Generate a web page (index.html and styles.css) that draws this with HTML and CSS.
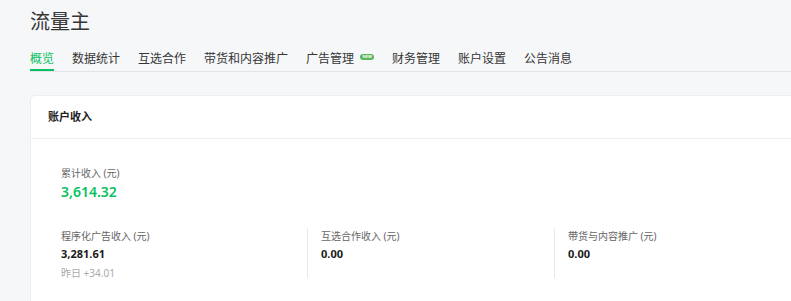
FILE: index.html
```html
<!DOCTYPE html>
<html lang="zh-CN">
<head>
<meta charset="utf-8">
<title>流量主</title>
<link rel="stylesheet" href="styles.css">
</head>
<body>
<div class="page">
  <h1 class="title">流量主</h1>
  <nav class="tabs">
    <a class="tab active">概览</a>
    <a class="tab">数据统计</a>
    <a class="tab">互选合作</a>
    <a class="tab">带货和内容推广</a>
    <a class="tab">广告管理<span class="badge">NEW</span></a>
    <a class="tab">财务管理</a>
    <a class="tab">账户设置</a>
    <a class="tab">公告消息</a>
  </nav>
  <section class="card">
    <div class="card-head">账户收入</div>
    <div class="card-body">
      <div class="total">
        <div class="label">累计收入 (元)</div>
        <div class="total-num">3,614.32</div>
      </div>
      <div class="cols">
        <div class="col">
          <div class="label">程序化广告收入 (元)</div>
          <div class="num">3,281.61</div>
          <div class="sub">昨日 +34.01</div>
        </div>
        <div class="col">
          <div class="label">互选合作收入 (元)</div>
          <div class="num">0.00</div>
        </div>
        <div class="col">
          <div class="label">带货与内容推广 (元)</div>
          <div class="num">0.00</div>
        </div>
      </div>
    </div>
  </section>
</div>
</body>
</html>
```
FILE: styles.css
```css
html, body {
  margin: 0;
  padding: 0;
  background: #f6f7f9;
  overflow: hidden;
}
body {
  font-family: "Noto Sans", "Noto Sans CJK SC", sans-serif;
  color: #333;
}
.page {
  width: 1100px;
  padding: 10px 0 0 30px;
}
.title {
  margin: 0;
  font-size: 20px;
  line-height: 24px;
  font-weight: 400;
  color: #353535;
}
.tabs {
  display: flex;
  gap: 18px;
  margin-top: 15px;
  border-bottom: 1px solid #e2e4e8;
}
.tab {
  position: relative;
  font-size: 12px;
  line-height: 20px;
  color: #353535;
  border-bottom: 2px solid transparent;
  display: flex;
  align-items: flex-start;
}
.tab.active {
  color: #07c160;
  border-bottom-color: #07c160;
}
.badge {
  display: inline-block;
  margin: 5px 0 0 6px;
  width: 14px;
  height: 6px;
  border-radius: 3px;
  background: #5ab55e;
  color: #fff;
  font-size: 4px;
  line-height: 6px;
  text-align: center;
  font-weight: 700;
}
.card {
  margin-top: 23px;
  background: #fff;
  border: 1px solid #eceef1;
  border-radius: 5px;
  height: 260px;
}
.card-head {
  height: 42px;
  line-height: 42px;
  padding-left: 17px;
  font-size: 11px;
  font-weight: 700;
  color: #222;
  border-bottom: 1px solid #eff0f2;
}
.card-body {
  padding: 26px 0 0 30px;
}
.label {
  font-size: 10px;
  line-height: 16px;
  color: #666;
}
.total-num {
  font-size: 14px;
  line-height: 22px;
  font-weight: 600;
  color: #07c160;
}
.cols {
  display: flex;
  margin-top: 25px;
}
.col {
  width: 246px;
  height: 50px;
  box-sizing: border-box;
}
.col + .col {
  width: 247px;
  border-left: 1px solid #e8e9eb;
  padding-left: 13px;
}
.num {
  font-size: 11px;
  line-height: 20px;
  font-weight: 700;
  color: #1a1a1a;
}
.sub {
  margin-top: 2px;
  font-size: 10px;
  line-height: 14px;
  color: #aaa;
}
```
